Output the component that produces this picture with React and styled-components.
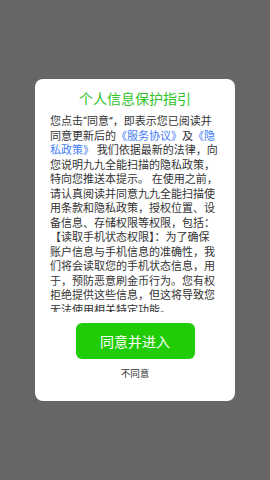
import React from 'react';
import styled, { createGlobalStyle } from 'styled-components';

const GlobalStyle = createGlobalStyle`
  html, body {
    margin: 0;
    padding: 0;
    background: #666666;
  }
  body {
    font-family: Roboto, "Noto Sans CJK SC", sans-serif;
  }
`;

const Overlay = styled.div`
  width: 270px;
  height: 480px;
  display: flex;
  align-items: center;
  justify-content: center;
  background: #666666;
`;

const Dialog = styled.div`
  width: 200px;
  box-sizing: border-box;
  background: #ffffff;
  border-radius: 8px;
  padding: 10px 15px 20px;
  display: flex;
  flex-direction: column;
  align-items: center;
`;

const Title = styled.div`
  font-size: 14px;
  line-height: 20px;
  color: #2fc42a;
  text-align: center;
`;

const Content = styled.div`
  margin-top: 6px;
  width: 170px;
  height: 197px;
  overflow-y: auto;
  font-size: 11px;
  line-height: 14.5px;
  color: #333333;
  &::-webkit-scrollbar {
    display: none;
  }
`;

const Link = styled.span`
  color: #3f7df5;
`;

const AgreeButton = styled.button`
  margin-top: 11px;
  width: 119px;
  height: 36px;
  border: none;
  border-radius: 6px;
  background: #1fcc05;
  color: #ffffff;
  font-family: inherit;
  font-size: 14px;
  padding: 0;
`;

const Decline = styled.div`
  margin-top: 8px;
  font-size: 9.5px;
  line-height: 14px;
  color: #333333;
`;

export default function App() {
  return (
    <>
      <GlobalStyle />
      <Overlay>
        <Dialog>
          <Title>个人信息保护指引</Title>
          <Content>
            您点击“同意”，即表示您已阅读并同意更新后的<Link>《服务协议》</Link>及<Link>《隐私政策》</Link> 我们依据最新的法律，向您说明九九全能扫描的隐私政策，特向您推送本提示。 在使用之前，请认真阅读并同意九九全能扫描使用条款和隐私政策，授权位置、设备信息、存储权限等权限，包括：
            【读取手机状态权限】：为了确保账户信息与手机信息的准确性，我们将会读取您的手机状态信息，用于，预防恶意刷金币行为。您有权拒绝提供这些信息，但这将导致您无法使用相关特定功能。
          </Content>
          <AgreeButton>同意并进入</AgreeButton>
          <Decline>不同意</Decline>
        </Dialog>
      </Overlay>
    </>
  );
}
